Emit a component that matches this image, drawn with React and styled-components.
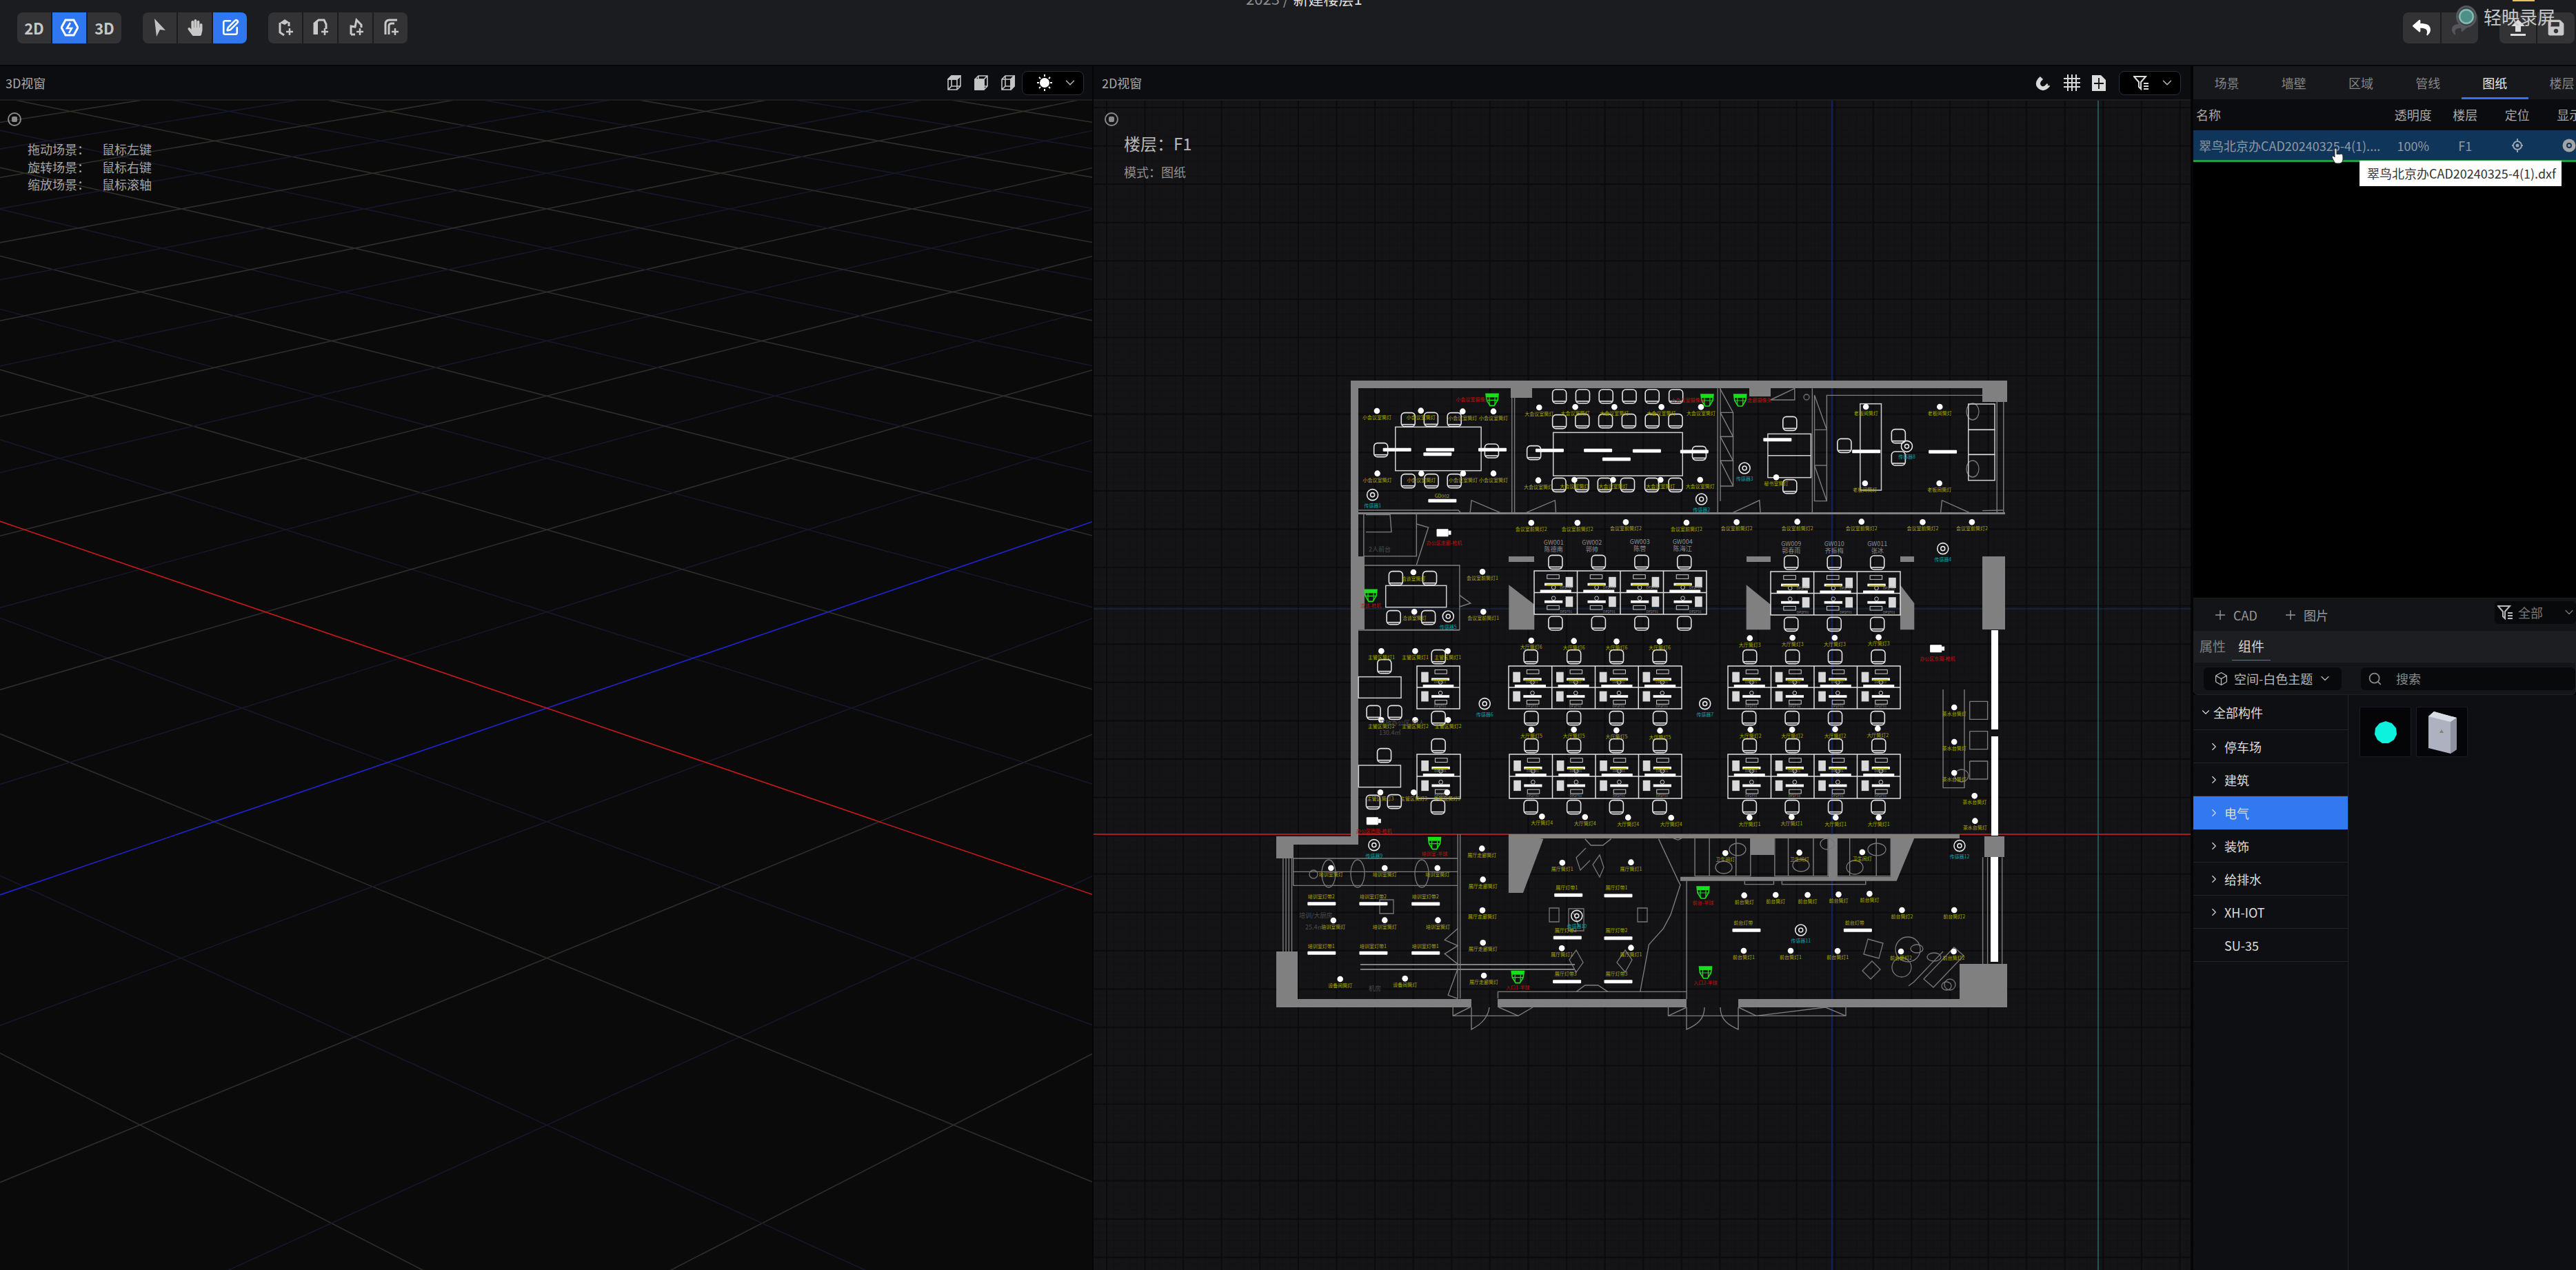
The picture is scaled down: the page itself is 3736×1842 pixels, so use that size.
import React from 'react'
import styled, { createGlobalStyle } from 'styled-components'
import { FaHandPaper, FaReply, FaShare, FaSave } from 'react-icons/fa'
import { ChevronDown, ChevronRight, Plus, Search, Box, SquarePen } from 'lucide-react'

const GlobalStyle = createGlobalStyle`
    html, body {
        margin: 0;
        padding: 0;
        height: 100%;
        background: #000;
    }
    #root {
        height: 100%;
    }
    * {
        box-sizing: border-box;
    }
`

const Page = styled.div`
    position: relative;
    display: flex;
    flex-direction: column;
    width: 100vw;
    height: 100vh;
    overflow: hidden;
    background: #000;
    color: #aaa;
    font-family: "Noto Sans CJK SC", "Noto Sans", sans-serif;
    font-size: 18px;
`

const TopBar = styled.div`
    position: relative;
    display: flex;
    align-items: center;
    justify-content: space-between;
    flex: 0 0 96px;
    padding: 0 2px 14px 25px;
    background: #1b1c20;
    border-bottom: 2px solid #060606;
`

const ToolRow = styled.div`
    display: flex;
    gap: 31px;
`

const ToolGroup = styled.div`
    display: flex;
    gap: 2px;
`

const ToolButton = styled.div`
    display: flex;
    align-items: center;
    justify-content: center;
    width: ${p => p.$width || 49}px;
    height: 45px;
    background: ${p => (p.$active ? '#2f77f1' : '#333335')};
    color: ${p => (p.$active ? '#fff' : p.$dim ? '#55555a' : '#c8c8c8')};
    font-size: 22px;
    font-weight: 700;

    &:first-child {
        border-radius: 8px 0 0 8px;
    }
    &:last-child {
        border-radius: 0 8px 8px 0;
    }
`

const ProjectTitle = styled.div`
    position: absolute;
    left: 1807px;
    top: -18px;
    color: #8c8c8c;
    font-size: 22px;
    line-height: 30px;
    white-space: nowrap;

    b {
        margin-left: 6px;
        color: #ddd;
        font-weight: 400;
    }
`

const Recorder = styled.div`
    position: absolute;
    left: 3562px;
    top: 8px;
    display: flex;
    align-items: center;
    gap: 10px;
    color: #c8c8c8;
    font-size: 26px;
    line-height: 32px;
`

const RecorderDot = styled.div`
    flex: 0 0 30px;
    height: 32px;
    border: 3px solid #555a5e;
    border-radius: 50%;
    background: radial-gradient(circle, #4f8f8a 0 45%, #9ad0c8 55%, #2a2d30 70%);
`

const YellowTick = styled.div`
    position: absolute;
    left: 3644px;
    top: 0;
    width: 32px;
    height: 2px;
    background: #e6c15a;
`

const Workspace = styled.div`
    display: flex;
    flex: 1;
    min-height: 0;
`

const Pane = styled.div`
    display: flex;
    flex-direction: column;
    flex: 0 0 ${p => p.$width}px;
    min-width: 0;
`

const PaneHeader = styled.div`
    display: flex;
    align-items: center;
    justify-content: space-between;
    flex: 0 0 50px;
    padding: 0 ${p => p.$right || 12}px 0 ${p => p.$left || 8}px;
    background: #0c0d10;
    border-bottom: 2px solid #1d1d1f;
    color: #a8a8a8;
    font-size: 18px;
`

const HeaderTools = styled.div`
    display: flex;
    align-items: center;
    gap: ${p => p.$gap || 19}px;
`

const ThemeSelect = styled.div`
    display: flex;
    align-items: center;
    justify-content: space-between;
    width: ${p => p.$width || 90}px;
    height: 35px;
    margin-left: ${p => p.$offset || 0}px;
    padding: 0 8px 0 20px;
    background: #000;
    border: 1px solid #2a2e3a;
    border-radius: 8px;
    color: #bbb;
`

const Divider = styled.div`
    flex: 0 0 ${p => p.$width}px;
    background: #050505;
`

const Canvas3D = styled.div`
    position: relative;
    flex: 1;
    overflow: hidden;
    background: #0a0a0b;
`

const Canvas2D = styled.div`
    position: relative;
    flex: 1;
    overflow: hidden;
    background-color: #141416;
    background-image:
        linear-gradient(#0b0b0c 2px, transparent 2px),
        linear-gradient(90deg, #0b0b0c 2px, transparent 2px),
        linear-gradient(#111113 1px, transparent 1px),
        linear-gradient(90deg, #111113 1px, transparent 1px);
    background-size: 55.6px 55.6px, 55.6px 55.6px, 11.12px 11.12px, 11.12px 11.12px;
    background-position: 0 9px, 18px 0, 0 9px, 18px 0;
`

const Drawing = styled.svg`
    position: absolute;
    inset: 0;
    width: 100%;
    height: 100%;
    font-family: "Noto Sans CJK SC", sans-serif;
`

const Overlay = styled.div`
    position: absolute;
    left: ${p => p.$left}px;
    top: ${p => p.$top}px;
`

const RecordMark = styled.div`
    display: flex;
    align-items: center;
    justify-content: center;
    width: 20px;
    height: 20px;
    border: 2px solid #8a8a8a;
    border-radius: 50%;

    &::after {
        content: "";
        width: 8px;
        height: 8px;
        border-radius: 2px;
        background: #8a8a8a;
    }
`

const HintRow = styled.div`
    display: grid;
    grid-template-columns: 108px auto;
    height: 25.5px;
    line-height: 25.5px;
    color: #a4a4a4;
    font-size: 18px;
`

const FloorTitle = styled.div`
    color: #b8b8b8;
    font-size: 24px;
    line-height: 34px;
`

const FloorMode = styled.div`
    margin-top: 11px;
    color: #909090;
    font-size: 18px;
    line-height: 26px;
`

const SidePanel = styled.div`
    position: relative;
    display: flex;
    flex-direction: column;
    flex: 1;
    min-width: 0;
    overflow: hidden;
    background: #000;
`

const SideTabs = styled.div`
    display: flex;
    flex: 0 0 48px;
    background: #17181b;
`

const SideTab = styled.div`
    position: relative;
    display: flex;
    align-items: center;
    justify-content: center;
    flex: 0 0 97.2px;
    color: ${p => (p.$active ? '#e8e8e8' : '#858585')};
    font-size: 18px;

    ${p => p.$active && `
        &::after {
            content: "";
            position: absolute;
            left: 0;
            right: 0;
            bottom: 0;
            height: 3px;
            background: #2f77f1;
        }
    `}
`

const FileHead = styled.div`
    display: grid;
    grid-template-columns: 281px repeat(4, 75.5px);
    align-items: center;
    flex: 0 0 45px;
    padding-bottom: 2px;
    background: #0b0c0f;
    color: #a8a8a8;
    font-size: 18px;
    white-space: nowrap;

    span:first-child {
        padding-left: 4px;
    }
    span:not(:first-child) {
        text-align: center;
    }
`

const FileRow = styled(FileHead)`
    flex: 0 0 46px;
    padding-bottom: 0;
    background: #10355a;
    border-bottom: 3px solid #2a9a3f;
    color: #8f9aa5;

    span:first-child {
        padding-left: 8px;
        overflow: hidden;
    }
    span:not(:first-child) {
        display: flex;
        justify-content: center;
    }
`

const FileList = styled.div`
    flex: 1;
    background: #000;
`

const Tooltip = styled.div`
    position: absolute;
    left: 241px;
    top: 137px;
    z-index: 2;
    width: 293px;
    height: 37px;
    padding-left: 11px;
    background: #fff;
    color: #333;
    font-size: 18px;
    line-height: 37px;
    white-space: nowrap;
`

const HandCursor = styled.svg`
    position: absolute;
    left: 200px;
    top: 118px;
    z-index: 3;
    width: 20px;
    height: 24px;
`

const ActionBar = styled.div`
    display: flex;
    align-items: center;
    flex: 0 0 48px;
    padding: 0 0 0 28px;
    background: #131417;
    border-top: 1px solid #1c1d20;
    color: #999;
    font-size: 18px;
`

const ActionLink = styled.div`
    display: flex;
    align-items: center;
    gap: 8px;
    width: ${p => p.$width}px;
`

const FilterSelect = styled.div`
    display: flex;
    align-items: center;
    flex: 0 0 113px;
    gap: 6px;
    height: 33px;
    margin-left: auto;
    margin-top: -7px;
    padding-left: 4px;
    background: #08090b;
    border-radius: 6px;
    color: #777;
    white-space: nowrap;

    svg {
        flex-shrink: 0;
    }
`

const SubTabs = styled.div`
    display: flex;
    align-items: stretch;
    flex: 0 0 45px;
    padding-left: 9px;
    gap: 9px;
    background: #1d1e21;
`

const SubTab = styled.div`
    display: flex;
    align-items: center;
    justify-content: center;
    color: ${p => (p.$active ? '#d8d8d8' : '#808080')};
    border-bottom: 1px solid ${p => (p.$active ? '#2f77f1' : 'transparent')};
    margin-bottom: 2px;
    padding: 0 ${p => (p.$active ? 9 : 0)}px;
    font-size: 19px;
`

const FilterBar = styled.div`
    display: flex;
    align-items: center;
    flex: 0 0 48px;
    padding-left: 14px;
    background: #141518;
    border: 1px solid #202126;
    border-radius: 0 0 6px 6px;
`

const SpaceSelect = styled.div`
    display: flex;
    align-items: center;
    gap: 8px;
    width: 200px;
    height: 33px;
    padding-left: 15px;
    background: #08090b;
    border-radius: 6px;
    color: #b8b8b8;
    white-space: nowrap;
`

const SearchBox = styled.div`
    display: flex;
    align-items: center;
    gap: 20px;
    flex: 1;
    height: 33px;
    margin-left: 28px;
    padding-left: 10px;
    background: #08090b;
    border-radius: 6px;
    color: #8a8a8a;
`

const LibraryBody = styled.div`
    display: flex;
    flex: 0 0 834px;
    min-height: 0;
    background: #0e0f12;
`

const Tree = styled.div`
    flex: 0 0 225px;
    border-right: 1px solid #24252b;
`

const TreeRow = styled.div`
    display: flex;
    align-items: center;
    gap: ${p => (p.$root ? 2 : 6)}px;
    height: ${p => (p.$root ? 51 : 48)}px;
    padding-left: ${p => (p.$root ? 9 : p.$leaf ? 45 : 21)}px;
    background: ${p => (p.$active ? '#3278f0' : 'transparent')};
    border-bottom: 1px solid ${p => (p.$active ? '#3278f0' : '#24252b')};
    color: #dcdcdc;
    font-size: 18px;
`

const Thumbs = styled.div`
    display: flex;
    align-items: flex-start;
    gap: 7px;
    padding: 17px 0 0 16px;
`

const Thumb = styled.div`
    display: flex;
    align-items: center;
    justify-content: center;
    width: 75px;
    height: 73px;
    background: #050507;
    border: 1px solid #1c1d24;
    border-radius: 2px;
`

/* ---- small icons ---- */

const ModeIcon = () => (
    <svg width="26" height="28" viewBox="0 0 26 28" fill="none" stroke="#fff" strokeWidth="3">
        <path d="M7 3h12l6 11-6 11H7L1 14z" />
        <path d="M14 7l-5 8h7l-4 7" strokeWidth="2.5" />
    </svg>
)

const PointerIcon = () => (
    <svg width="18" height="28" viewBox="0 0 18 28"><path d="M1 1l16 17-8-1-5 10z" fill="#c2c2c2" /></svg>
)

const DoorIcon = ({ d, fill }) => (
    <svg width="26" height="28" viewBox="0 0 26 28" fill="none" stroke="#c8c8c8" strokeWidth="3">
        {fill && <path d={fill} fill="#c8c8c8" stroke="none" />}
        <path d={d} />
        <path d="M19 15v10M14 20h10" strokeWidth="2.5" />
    </svg>
)

const UploadIcon = () => (
    <svg width="24" height="26" viewBox="0 0 24 26" fill="#ddd"><path d="M12 1l10 10h-6v8H8v-8H2zM1 22h22v3H1z" /></svg>
)

const CubeIcon = ({ mode }) => (
    <svg width="20" height="22" viewBox="0 0 20 22" fill="none" stroke="#c4c4c4" strokeWidth="1.6">
        {mode === 'top' && <path d="M1 6l5-5h13l-5 5z" fill="#c4c4c4" />}
        {mode === 'front' && <path d="M1 6h13v15H1z" fill="#c4c4c4" />}
        {mode === 'side' && <path d="M14 6l5-5v15l-5 5z" fill="#c4c4c4" />}
        <path d="M1 6l5-5h13v15l-5 5H1zM1 6h13v15M14 6l5-5M1 21l5-5V1M6 16h13" />
    </svg>
)

const SunIcon = () => (
    <svg width="24" height="26" viewBox="0 0 24 26" fill="#fff" stroke="#fff" strokeWidth="2">
        <circle cx="12" cy="13" r="6" />
        <path d="M12 1v3M12 22v3M1 13h3M20 13h3M4 5l2 2M18 19l2 2M20 5l-2 2M6 19l-2 2" fill="none" />
    </svg>
)

const FilterIcon = ({ color = '#ddd' }) => (
    <svg width="24" height="22" viewBox="0 0 24 22" fill="none" stroke={color} strokeWidth="2">
        <path d="M1 2h17l-7 8v10l-3-3v-7z" />
        <path d="M15 12h7M15 16h7M15 20h7" />
    </svg>
)

const MagnetIcon = () => (
    <svg width="24" height="24" viewBox="0 0 24 24" fill="none" stroke="#d8d8d8" strokeWidth="6">
        <path d="M9 5l-3 3c-3 4-3 7 0 10s7 3 10 0l3-3" />
        <path d="M8 1l5 5M23 11l-5 5" stroke="#141416" strokeWidth="1.5" />
    </svg>
)

const GridIcon = () => (
    <svg width="24" height="24" viewBox="0 0 24 24" stroke="#d8d8d8" strokeWidth="2">
        <path d="M6 0v24M12 0v24M18 0v24M0 6h24M0 12h24M0 18h24" />
    </svg>
)

const SheetIcon = () => (
    <svg width="20" height="23" viewBox="0 0 20 23">
        <path d="M0 0h13l7 7v16H0z" fill="#dcdcdc" />
        <path d="M10 4v16M3 12h14" stroke="#111" strokeWidth="1.8" />
    </svg>
)

const LocateIcon = () => (
    <svg width="20" height="22" viewBox="0 0 20 22" fill="none" stroke="#99a4b0" strokeWidth="2">
        <path d="M10 1v4M10 17v4M2 11h3M15 11h3" />
        <circle cx="10" cy="11" r="6" />
        <circle cx="10" cy="11" r="2.5" fill="#99a4b0" stroke="none" />
    </svg>
)

const EyeIcon = () => (
    <svg width="20" height="20" viewBox="0 0 20 20">
        <circle cx="10" cy="10" r="9.5" fill="#a4a4a4" />
        <circle cx="10" cy="10" r="4" fill="#10355a" />
        <circle cx="10" cy="10" r="2" fill="#a4a4a4" />
    </svg>
)

/* ---- 3D ground grid, two vanishing points on the horizon ---- */

const HORIZON = -780
const VP_RIGHT = 6082
const VP_LEFT = -4496
const CENTER_X = 793

function gridLine(vpX, n) {
    const y = 1 / (5.534e-4 + n * 4.625e-5) + HORIZON
    const slope = (HORIZON - y) / (vpX - CENTER_X)
    return { y1: y + slope * (0 - CENTER_X), y2: y + slope * (1584 - CENTER_X) }
}

function GroundGrid() {
    const lines = []
    for (let n = -8; n <= 16; n++) {
        if (n === 0) continue
        const color = n % 2 === 0 ? '#2f2e2b' : '#17172c'
        lines.push({ key: 'r' + n, ...gridLine(VP_RIGHT, n), color })
        lines.push({ key: 'l' + n, ...gridLine(VP_LEFT, n), color })
    }
    const blue = gridLine(VP_RIGHT, 0)
    const red = gridLine(VP_LEFT, 0)
    return (
        <Drawing viewBox="0 146 1584 1696" preserveAspectRatio="none">
            {lines.map(l => (
                <line key={l.key} x1="0" x2="1584" y1={l.y1} y2={l.y2} stroke={l.color} strokeWidth="1.6" />
            ))}
            <line x1="0" x2="1584" y1={blue.y1} y2={blue.y2} stroke="#2222d0" strokeWidth="1.6" />
            <line x1="0" x2="1584" y1={red.y1} y2={red.y2} stroke="#c81a1a" strokeWidth="1.6" />
        </Drawing>
    )
}

/* ---- floor plan ---- */

const GRAY = '#808080'
const up = (X, Y) => [1930 + X / 1.568, 530 + Y / 3]
const low = (X, Y) => [1830 + X / 1.425, 1000 + Y / 3]

const pts = (fn, list) => list.map(([X, Y]) => fn(X, Y).join(',')).join(' ')
const row = (fn, list, label) => list.map(([X, Y]) => ({ at: fn(X, Y), label }))

const WALLS = [
    [1959, 552, 952, 11], [1959, 552, 11, 661], [1851, 1213, 119, 12], [1851, 1213, 25, 32],
    [1851, 1380, 31, 81], [1851, 1449, 283, 12], [2172, 1449, 274, 12], [2521, 1449, 390, 12],
    [2842, 1398, 69, 63], [2875, 552, 36, 31], [2191, 563, 31, 14], [2537, 563, 31, 12],
    [1970, 743, 938, 3], [2875, 807, 33, 106], [2878, 1213, 29, 30], [1959, 807, 20, 106],
    [2188, 1210, 654, 6], [2188, 807, 37, 8], [2533, 807, 35, 8], [2756, 807, 20, 8],
    [2539, 1213, 34, 27], [2652, 1213, 13, 60], [1973, 1398, 311, 2], [1973, 1405, 311, 2],
]

const WHITE_STRIPS = [[2888, 914, 10, 144], [2888, 1068, 10, 144], [2887, 1243, 11, 152]]

const WALL_POLYS = [
    [up, [[405, 955], [463, 1040], [463, 1150], [405, 1150]]],
    [up, [[945, 955], [1000, 1040], [1000, 1150], [945, 1150]]],
    [up, [[1295, 955], [1327, 1035], [1327, 1150], [1295, 1150]]],
    [low, [[510, 630], [582, 650], [540, 885], [510, 885]]],
    [low, [[865, 815], [1300, 815], [1300, 640], [1350, 640], [1312, 833], [865, 833]]],
]

const THIN_LINES = [
    [up, [[412, 140], [412, 640]]], [up, [[418, 140], [418, 640]]],
    [up, [[880, 100], [880, 640]]], [up, [[886, 100], [886, 590]]],
    [up, [[885, 100], [915, 205], [915, 525], [885, 525]]],
    [up, [[886, 205], [915, 205]]], [up, [[886, 310], [915, 310]]], [up, [[886, 415], [915, 415]]],
    [up, [[886, 205], [915, 310], [886, 310], [915, 415], [886, 415], [915, 525]]],
    [up, [[1095, 100], [1095, 640]]], [up, [[1100, 130], [1100, 590], [1128, 590], [1128, 130], [1482, 130]]],
    [up, [[1100, 130], [1128, 280], [1100, 280]]], [up, [[1100, 435], [1128, 590]]], [up, [[1100, 435], [1128, 435]]],
    [up, [[1000, 150], [1055, 100], [1055, 150], [1000, 150]]],
    [up, [[1530, 140], [1530, 640]]], [up, [[1515, 140], [1515, 640]]],
    [up, [[63, 630], [290, 630], [295, 640]]], [up, [[1482, 632], [1530, 630]]],
    [up, [[317, 640], [320, 587], [385, 640]]], [up, [[445, 640], [510, 587], [512, 640]]],
    [up, [[915, 640], [975, 587], [977, 640]]], [up, [[1387, 640], [1390, 587], [1452, 640]]],
    [up, [[75, 648], [75, 830], [195, 830], [195, 648]]], [up, [[80, 650], [135, 650], [138, 725], [80, 725]]],
    [up, [[195, 690], [222, 705], [195, 868]]],
    [up, [[77, 870], [293, 870], [293, 1150], [77, 1150]]],
    [up, [[293, 1000], [318, 1035], [293, 1050]]],
    [up, [[63, 1152], [293, 1152]]],
    [low, [[405, 630], [405, 1345]]], [low, [[410, 630], [410, 1345]]],
    [low, [[65, 735], [405, 735]]], [low, [[65, 793], [405, 793]]], [low, [[65, 853], [405, 853]]],
    [low, [[65, 735], [65, 853]]],
    [low, [[44, 735], [44, 1140]]], [low, [[50, 735], [50, 1140]]], [low, [[56, 735], [56, 1140]]], [low, [[62, 735], [62, 1140]]],
    [low, [[405, 1040], [378, 1090], [405, 1115], [378, 1150], [405, 1195]]],
    [low, [[405, 1215], [385, 1330], [405, 1345]]],
    [low, [[488, 1345], [488, 1315], [878, 1315]]],
    [low, [[650, 1315], [668, 1287], [695, 1287], [715, 1315]]],
    [low, [[668, 650], [680, 678], [705, 678], [722, 650]]],
    [low, [[820, 650], [860, 830], [865, 850], [845, 980], [830, 1040], [800, 1110], [782, 1315]]],
    [low, [[830, 630], [860, 655], [885, 630]]],
    [low, [[878, 833], [878, 1347]]],
    [low, [[895, 640], [895, 812], [1010, 812], [1010, 640]]], [low, [[925, 640], [925, 812]]], [low, [[980, 640], [980, 812]]],
    [low, [[1060, 640], [1060, 812], [1170, 812], [1170, 640]]], [low, [[1088, 640], [1088, 812]]], [low, [[1140, 640], [1140, 812]]],
    [low, [[1188, 640], [1188, 812], [1300, 812], [1300, 640]]], [low, [[1215, 640], [1215, 812]]], [low, [[1270, 640], [1270, 812]]],
    [low, [[998, 833], [998, 848], [1058, 848], [1058, 833]]], [low, [[1075, 833], [1075, 848], [1248, 848], [1248, 833]]],
    [low, [[395, 1383], [395, 1420], [530, 1420], [560, 1383]]], [low, [[395, 1420], [430, 1383]]], [low, [[490, 1383], [530, 1420]]],
    [low, [[840, 1383], [840, 1420], [1207, 1420], [1207, 1383]]], [low, [[840, 1420], [878, 1383]]], [low, [[985, 1383], [1022, 1420], [1165, 1383], [1207, 1420]]],
    [low, [[1490, 730], [1490, 1195]]], [low, [[1530, 730], [1530, 1195]]], [low, [[1500, 730], [1500, 1195]]],
    [low, [[1408, 0], [1408, 428], [1452, 428], [1452, 0]]],
    [low, [[1463, 52], [1500, 52], [1500, 130], [1463, 130], [1463, 52]]],
    [low, [[1463, 182], [1500, 182], [1500, 260], [1463, 260], [1463, 182]]],
    [low, [[1463, 312], [1500, 312], [1500, 390], [1463, 390], [1463, 312]]],
]

const DOOR_ARCS = [
    'M2134 1461v32c12-6 24-16 26-32', 'M2446 1461v32c14-6 26-14 26-32', 'M2521 1461v32c-14-6-26-14-26-32',
]

/* toilets, plants and round tables */
const LOUNGE = [
    [2767, 1377, 18, 18], [2758, 1403, 14, 14], [2828, 1428, 8, 8], [2823, 1430, 7, 6],
    [2722, 1232, 13, 9], [2690, 1258, 12, 10], [2650, 1224, 10, 8], [2612, 1255, 12, 9], [2520, 1232, 12, 9], [2500, 1258, 12, 9],
    [2780, 1376, 9, 6], [2805, 1388, 10, 6], [2620, 576, 4, 4],
    [1927, 1267, 10, 20], [1969, 1267, 10, 20], [2062, 1267, 10, 20],
    [2861, 597, 9, 12], [2861, 680, 9, 12], [2845, 1125, 10, 9], [1905, 1268, 6, 6],
]

const WHITE_BARS = [
    ...[[150, 367], [248, 367], [242, 386], [367, 367], [497, 370], [607, 370], [718, 372], [826, 375], [649, 408], [253, 589], [1015, 323], [1217, 374], [1391, 376]].map(([X, Y]) => up(X, Y)),
    ...[[123, 932], [230, 932], [338, 933], [123, 1147], [230, 1147], [338, 1147], [633, 895], [736, 897], [631, 1080], [736, 1082], [630, 1271], [736, 1271], [1001, 1048], [1231, 1048]].map(([X, Y]) => low(X, Y)),
]

const BAR_LABELS = [
    [low(123, 1118), '培训室灯带1'], [low(230, 1118), '培训室灯带1'], [low(338, 1118), '培训室灯带1'],
    [low(123, 903), '培训室灯带2'], [low(230, 903), '培训室灯带2'], [low(338, 903), '培训室灯带2'],
    [low(630, 865), '展厅灯带1'], [low(733, 865), '展厅灯带1'], [low(628, 1050), '展厅灯带2'], [low(733, 1050), '展厅灯带2'],
    [low(628, 1240), '展厅灯带3'], [low(733, 1240), '展厅灯带3'], [low(995, 1018), '前台灯带'], [low(1225, 1018), '前台灯带'],
    [up(253, 569), 'GD002'],
]

const LIGHTS = [
    ...row(up, [[105, 198], [205, 197], [300, 200], [370, 200], [106, 470], [206, 470], [301, 470], [370, 470]], '小会议室筒灯'),
    ...row(up, [[474, 183], [556, 181], [645, 181], [752, 181], [842, 181], [472, 500], [554, 498], [642, 498], [750, 498], [840, 498]], '大会议室筒灯'),
    ...row(up, [[1217, 180], [1385, 180], [1215, 513], [1384, 513]], '老板间筒灯'),
    ...row(up, [[1013, 487]], '秘书室筒灯'),
    ...row(up, [[456, 685], [561, 685], [671, 682], [809, 684], [923, 682], [1061, 680], [1207, 680], [1346, 682], [1458, 682]], '会议室前筒灯2'),
    ...row(up, [[345, 898], [347, 1072]], '会议室前筒灯1'),
    ...row(up, [[188, 900], [190, 1072]], '洽谈室筒灯'),
    ...row(up, [[456, 1197], [553, 1199], [650, 1201], [748, 1201]], '大厅筒灯6'),
    ...row(up, [[953, 1187], [1050, 1185], [1146, 1185], [1246, 1183]], '大厅筒灯3'),
    ...row(up, [[115, 1243], [192, 1243], [266, 1243]], '主管区筒灯1'),
    ...row(low, [[247, 133], [317, 133], [385, 133]], '主管区筒灯2'),
    ...row(low, [[557, 175], [645, 175], [733, 178], [823, 179]], '大厅筒灯5'),
    ...row(low, [[1010, 175], [1096, 175], [1185, 173], [1273, 170]], '大厅筒灯2'),
    ...row(low, [[245, 448], [314, 448], [383, 448]], '主管区筒灯3'),
    ...row(low, [[579, 553], [668, 555], [757, 557], [846, 558]], '大厅筒灯4'),
    ...row(low, [[1008, 557], [1095, 555], [1186, 557], [1275, 557]], '大厅筒灯1'),
    ...row(low, [[1473, 463], [1474, 572], [1431, 78], [1431, 228], [1431, 363]], '茶水台筒灯'),
    ...row(low, [[455, 692], [457, 827], [456, 961], [457, 1102], [459, 1245]], '展厅走廊筒灯'),
    ...row(low, [[621, 754], [763, 752], [620, 1126], [763, 1124]], '展厅筒灯1'),
    ...row(low, [[143, 777], [254, 777], [363, 777], [148, 1005], [254, 1004], [364, 1004]], '培训室筒灯'),
    ...row(low, [[162, 1260], [296, 1258]], '设备间筒灯'),
    ...row(low, [[958, 712], [1111, 710], [1241, 708]], '卫生间灯'),
    ...row(low, [[997, 896], [1062, 894], [1128, 894], [1192, 892], [1256, 889]], '前台筒灯'),
    ...row(low, [[1323, 960], [1431, 960], [1321, 1140], [1430, 1140]], '前台筒灯2'),
    ...row(low, [[996, 1137], [1093, 1137], [1190, 1138]], '前台筒灯1'),
]

const CHAIRS = [
    ...[[520, 135], [573, 135], [626, 135], [679, 135], [731, 135], [785, 135], [520, 245], [572, 242], [625, 242], [678, 242], [731, 242], [784, 242],
        [519, 520], [571, 520], [623, 520], [675, 520], [730, 520], [784, 520], [176, 236], [228, 235], [281, 236], [176, 503], [229, 503], [281, 503],
        [1044, 253], [1044, 527], [511, 856], [609, 856], [707, 856], [804, 856], [1047, 858], [1145, 858], [1243, 858],
        [511, 1122], [609, 1122], [707, 1122], [804, 1122], [1047, 1126], [1145, 1126], [1243, 1126], [148, 926], [225, 926], [143, 1097], [222, 1097],
        [455, 1268], [553, 1268], [650, 1268], [748, 1268], [953, 1268], [1050, 1268], [1147, 1268], [1245, 1268], [245, 1268], [122, 1310], [1291, 308], [1291, 405],
        [462, 380], [838, 382], [114, 368], [366, 372], [1168, 349]].map(([X, Y]) => up(X, Y)),
    ...[[231, 100], [275, 100], [365, 125], [557, 125], [645, 125], [733, 125], [823, 125], [1007, 125], [1096, 125], [1185, 125], [1273, 125],
        [365, 245], [253, 287], [557, 245], [645, 245], [733, 245], [823, 245], [1008, 245], [1097, 245], [1186, 245], [1275, 245],
        [230, 490], [274, 488], [364, 512], [556, 512], [645, 512], [733, 512], [822, 512], [1008, 512], [1096, 512], [1185, 512], [1274, 512]].map(([X, Y]) => low(X, Y)),
]

const SENSORS = [
    ...[[95, 563], [843, 582], [941, 447], [1392, 797], [267, 1092], [350, 1472], [851, 1472], [1310, 352]].map(([X, Y]) => up(X, Y)),
    ...[[232, 677], [651, 985], [1114, 1047], [1442, 680]].map(([X, Y]) => low(X, Y)),
]

const CAMERAS = [
    [up(367, 148), '小会议室摄像头', -1], [up(856, 150), '大会议室摄像头', -1], [up(931, 150), '走廊摄像头', 1], [up(91, 1000), '洽谈-枪机', 0],
    [low(357, 668), '培训室-半球', 0], [low(912, 882), '前台-半球', 0], [low(529, 1250), '入口1-半球', 0], [low(917, 1230), '入口2-半球', 0],
]

const BULLETS = [
    [up(258, 728), '办公区走廊-枪机'], [up(1380, 1232), '办公区东南-枪机'], [low(232, 572), '办公区西南-枪机'],
]

const GW_LABELS = [
    [up(507, 770), 'GW001', '陈德南'], [up(594, 770), 'GW002', '郭帅'], [up(703, 767), 'GW003', '陈营'], [up(800, 768), 'GW004', '陈海江'],
    [up(1047, 776), 'GW009', '郭春雨'], [up(1145, 776), 'GW010', '齐振梅'], [up(1243, 776), 'GW011', '张冰'],
]

const STATION_BLOCKS = [
    { x: 2225, y: 828, w: 250, h: 63, cols: 4 },
    { x: 2568, y: 829, w: 188, h: 63, cols: 3 },
    { x: 2188, y: 966, w: 251, h: 62, cols: 4, mirror: true },
    { x: 2506, y: 966, w: 250, h: 62, cols: 4, mirror: true },
    { x: 2189, y: 1094, w: 250, h: 64, cols: 4, mirror: true },
    { x: 2506, y: 1094, w: 250, h: 64, cols: 4, mirror: true },
    { x: 2055, y: 966, w: 62, h: 62, cols: 1, mirror: true },
    { x: 2055, y: 1094, w: 63, h: 64, cols: 1, mirror: true },
]

const ROOM_RECTS = [
    [up(147, 268), up(342, 458)], [up(506, 292), up(800, 480)], [up(994, 298), up(1092, 488)],
    [up(125, 958), up(263, 1052)], [up(63, 1355), up(160, 1447)], [low(200, 330), low(287, 425)],
    [up(1204, 167), up(1252, 543)], [up(1450, 168), up(1510, 280)], [up(1450, 280), up(1510, 388)], [up(1450, 388), up(1510, 500)],
]

const StationCell = ({ x, y, w, h, flip, mirror }) => {
    const m = v => (mirror ? x + w - (v - x) : v)
    const box = (vx, vw) => (mirror ? m(vx) - vw : vx)
    const top = flip ? y + h * 0.08 : y + h * 0.18
    return (
        <g>
            <rect x={box(x + w * 0.3, w * 0.28)} y={flip ? y + h * 0.6 : y + h * 0.18} width={w * 0.28} height={h * 0.18} fill="none" stroke="#cfcfcf" />
            <rect x={box(x + w * 0.73, w * 0.17)} y={top + h * 0.1} width={w * 0.17} height={h * 0.48} fill="#d8d8d8" />
            <rect x={box(x + w * 0.24, w * 0.42)} y={flip ? y + h * 0.36 : y + h * 0.56} width={w * 0.42} height={h * 0.12} fill="#fff" />
            <circle cx={m(x + w * 0.45)} cy={flip ? y + h * 0.26 : y + h * 0.76} r={h * 0.09} fill="none" stroke="#cfcfcf" />
            {!flip && <rect x={box(x + w * 0.14, w * 0.72)} y={y + h - 4} width={w * 0.72} height={4} fill="#fff" />}
            {!flip && <rect x={box(x + w * 0.28, w * 0.36)} y={y + h * 0.62} width={w * 0.36} height={2} fill="#b5b500" />}
            <text x={box(x + w * 0.6, 0)} y={y + h - (flip ? 2 : 6)} fontSize="5" fill="#8a8a8a">DP2F01</text>
        </g>
    )
}

function FloorPlan() {
    return (
        <Drawing viewBox="1586 146 1591 1696" preserveAspectRatio="none">
            <line x1="1586" x2="3177" y1="1210" y2="1210" stroke="#a81c1c" strokeWidth="2" />
            <line x1="1586" x2="3177" y1="883" y2="883" stroke="#18305c" strokeWidth="1.2" />
            <line x1="2657" x2="2657" y1="146" y2="1842" stroke="#182478" strokeWidth="1.5" />
            <line x1="3043" x2="3043" y1="146" y2="1842" stroke="#2c6a70" strokeWidth="1.5" />

            {WALLS.map(([x, y, w, h], i) => <rect key={i} x={x} y={y} width={w} height={h} fill={GRAY} />)}
            {WALL_POLYS.map(([fn, list], i) => <polygon key={i} points={pts(fn, list)} fill={GRAY} />)}
            {WHITE_STRIPS.map(([x, y, w, h], i) => <rect key={i} x={x} y={y} width={w} height={h} fill="#fff" />)}
            {THIN_LINES.map(([fn, list], i) => <polyline key={i} points={pts(fn, list)} fill="none" stroke="#7c7c7c" strokeWidth="1.4" />)}
            {DOOR_ARCS.map((d, i) => <path key={i} d={d} fill="none" stroke="#7c7c7c" strokeWidth="1.4" />)}
            {LOUNGE.map(([cx, cy, rx, ry], i) => <ellipse key={i} cx={cx} cy={cy} rx={rx} ry={ry} fill="none" stroke="#777" strokeWidth="1.3" />)}
            <g fill="none" stroke="#777" strokeWidth="1.3">
                <path d="M2790 1420l44-46 14 12-44 46zM2768 1430l8-6 42-44" />
                <path d="M2709 1362l22 6-6 22-22-6zM2727 1406l-14 14-12-12 14-14zM2320 1240l6 18-6 14-10-18zM2300 1230l-14 14 6 18 14-14" />
                <path d="M2275 1318h22v32h-22zM2282 1324l8 20M2247 1317h14v20h-14zM2375 1317h14v20h-14z" />
                <path d="M2286 1378l10 18-10 14-10-18zM2357 1378l-12 18 12 14 10-18z" />
                <path d="M2001 1305h20v20h-20z" />
            </g>

            {ROOM_RECTS.map(([a, b], i) => (
                <rect key={i} x={a[0]} y={a[1]} width={b[0] - a[0]} height={b[1] - a[1]} fill="none" stroke="#d0d0d0" strokeWidth="1.5" />
            ))}
            <line x1={up(994, 392)[0]} x2={up(1092, 392)[0]} y1={up(994, 392)[1]} y2={up(1092, 392)[1]} stroke="#d0d0d0" strokeWidth="1.5" />

            {STATION_BLOCKS.map((b, i) => {
                const cw = b.w / b.cols
                const ch = b.h / 2
                return (
                    <g key={i}>
                        <rect x={b.x} y={b.y} width={b.w} height={b.h} fill="none" stroke="#e0e0e0" strokeWidth="1.5" />
                        <line x1={b.x} x2={b.x + b.w} y1={b.y + ch} y2={b.y + ch} stroke="#e0e0e0" strokeWidth="1.5" />
                        {Array.from({ length: b.cols }).map((_, c) => (
                            <g key={c}>
                                {c > 0 && <line x1={b.x + cw * c} x2={b.x + cw * c} y1={b.y} y2={b.y + b.h} stroke="#e0e0e0" strokeWidth="1.5" />}
                                <StationCell x={b.x + cw * c} y={b.y} w={cw} h={ch} mirror={b.mirror} />
                                <StationCell x={b.x + cw * c} y={b.y + ch} w={cw} h={ch} flip mirror={b.mirror} />
                            </g>
                        ))}
                    </g>
                )
            })}

            {CHAIRS.map(([x, y], i) => (
                <g key={i} fill="none" stroke="#e4e4e4" strokeWidth="1.6">
                    <rect x={x - 10} y={y - 10} width="20" height="20" rx="5" />
                    <line x1={x - 9} x2={x + 9} y1={y + 7} y2={y + 7} />
                </g>
            ))}

            {WHITE_BARS.map(([x, y], i) => <rect key={i} x={x - 20} y={y - 2.5} width="41" height="5" rx="1" fill="#fff" />)}
            {BAR_LABELS.map(([[x, y], t], i) => <text key={i} x={x} y={y + 2} textAnchor="middle" fontSize="7" fill="#a8a800">{t}</text>)}

            {LIGHTS.map(({ at: [x, y], label }, i) => (
                <g key={i}>
                    <circle cx={x} cy={y} r="4.3" fill="#fff" />
                    <text x={x} y={y + 12} textAnchor="middle" fontSize="7" fill="#a8a800">{label}</text>
                </g>
            ))}

            {SENSORS.map(([x, y], i) => (
                <g key={i} fill="none" stroke="#e8e8e8" strokeWidth="1.6">
                    <circle cx={x} cy={y} r="8" />
                    <circle cx={x} cy={y} r="3" />
                    <text x={x} y={y + 18} textAnchor="middle" fontSize="7" fill="#08a0a8" stroke="none">传感器{i + 1}</text>
                </g>
            ))}

            {CAMERAS.map(([[x, y], t, side], i) => (
                <g key={i}>
                    <path d={`M${x - 9} ${y - 8}h18l-1 9-5 8h-6l-5-8z`} fill="none" stroke="#18e018" strokeWidth="1.6" />
                    <path d={`M${x - 8} ${y + 1}h16M${x - 4} ${y - 3}v11M${x + 4} ${y - 3}v11`} fill="none" stroke="#18e018" strokeWidth="1.2" />
                    <rect x={x - 9} y={y - 8} width="18" height="5" fill="#18e018" />
                    <text x={side === 0 ? x : x + side * 28} y={side === 0 ? y + 18 : y + 3} textAnchor="middle" fontSize="7" fill="#c01010">{t}</text>
                </g>
            ))}

            {BULLETS.map(([[x, y], t], i) => (
                <g key={i}>
                    <rect x={x - 11} y={y - 5.5} width="17" height="11" rx="1" fill="#fff" />
                    <rect x={x + 6} y={y - 3} width="4" height="6" fill="#fff" />
                    <text x={x} y={y + 17} textAnchor="middle" fontSize="7" fill="#c01010">{t}</text>
                </g>
            ))}

            {GW_LABELS.map(([[x, y], code, name]) => (
                <g key={code} fontSize="9" fill="#8c8c8c" textAnchor="middle">
                    <text x={x} y={y + 3}>{code}</text>
                    <text x={x} y={y + 13}>{name}</text>
                </g>
            ))}
            <g fontSize="9" fill="#4c4c4c">
                <text x="2000" y="1052">开放办公区 35人</text>
                <text x="2000" y="1066">130.4㎡</text>
                <text x="1884" y="1331">培训/大厨房</text>
                <text x="1893" y="1348">25.4㎡</text>
                <text x="1985" y="800">2人前台</text>
                <text x="1985" y="1437">机房</text>
            </g>
        </Drawing>
    )
}

const TREE = ['停车场', '建筑', '电气', '装饰', '给排水', 'XH-IOT']

export default function App() {
    return (
        <Page>
            <GlobalStyle />
            <TopBar>
                <ToolRow>
                    <ToolGroup>
                        <ToolButton>2D</ToolButton>
                        <ToolButton $active><ModeIcon /></ToolButton>
                        <ToolButton>3D</ToolButton>
                    </ToolGroup>
                    <ToolGroup>
                        <ToolButton><PointerIcon /></ToolButton>
                        <ToolButton><FaHandPaper size={24} /></ToolButton>
                        <ToolButton $active><SquarePen size={26} strokeWidth={2.4} /></ToolButton>
                    </ToolGroup>
                    <ToolGroup>
                        <ToolButton><DoorIcon fill="M5 7l7-5 6 4-6 4z" d="M5 7v14l6 4M18 6v6" /></ToolButton>
                        <ToolButton><DoorIcon fill="M3 24V8l6-5v21z" d="M4 24V8l6-5h8l3 6v7" /></ToolButton>
                        <ToolButton><DoorIcon d="M6 24V12l6 1 2-10 7 7v4M6 24h6" /></ToolButton>
                        <ToolButton><DoorIcon d="M5 24V9c0-4 2-6 6-6h11M10 24V12c0-3 1-4 4-4h4" /></ToolButton>
                    </ToolGroup>
                </ToolRow>
                <ToolRow>
                    <ToolGroup>
                        <ToolButton $width={54}><FaReply size={26} color="#fff" /></ToolButton>
                        <ToolButton $dim $width={53}><FaShare size={24} /></ToolButton>
                    </ToolGroup>
                    <ToolGroup>
                        <ToolButton $width={53}><UploadIcon /></ToolButton>
                        <ToolButton $width={54}><FaSave size={26} /></ToolButton>
                    </ToolGroup>
                </ToolRow>
                <ProjectTitle>2023 /<b>新建楼层1</b></ProjectTitle>
                <Recorder><RecorderDot />轻映录屏</Recorder>
                <YellowTick />
            </TopBar>
            <Workspace>
                <Pane $width={1584}>
                    <PaneHeader>
                        3D视窗
                        <HeaderTools>
                            <CubeIcon mode="top" />
                            <CubeIcon mode="front" />
                            <CubeIcon mode="side" />
                            <ThemeSelect $offset={-9}><SunIcon /><ChevronDown size={22} strokeWidth={1.5} /></ThemeSelect>
                        </HeaderTools>
                    </PaneHeader>
                    <Canvas3D>
                        <GroundGrid />
                        <Overlay $left={11} $top={17}><RecordMark /></Overlay>
                        <Overlay $left={40} $top={58}>
                            <HintRow><span>拖动场景：</span><span>鼠标左键</span></HintRow>
                            <HintRow><span>旋转场景：</span><span>鼠标右键</span></HintRow>
                            <HintRow><span>缩放场景：</span><span>鼠标滚轴</span></HintRow>
                        </Overlay>
                    </Canvas3D>
                </Pane>
                <Divider $width={2} />
                <Pane $width={1591}>
                    <PaneHeader $left={12} $right={14}>
                        2D视窗
                        <HeaderTools $gap={17}>
                            <MagnetIcon />
                            <GridIcon />
                            <SheetIcon />
                            <ThemeSelect $offset={2}><FilterIcon /><ChevronDown size={22} strokeWidth={1.5} /></ThemeSelect>
                        </HeaderTools>
                    </PaneHeader>
                    <Canvas2D>
                        <FloorPlan />
                        <Overlay $left={16} $top={17}><RecordMark /></Overlay>
                        <Overlay $left={44} $top={45}>
                            <FloorTitle>楼层：F1</FloorTitle>
                            <FloorMode>模式：图纸</FloorMode>
                        </Overlay>
                    </Canvas2D>
                </Pane>
                <Divider $width={4} />
                <SidePanel>
                    <SideTabs>
                        <SideTab>场景</SideTab>
                        <SideTab>墙壁</SideTab>
                        <SideTab>区域</SideTab>
                        <SideTab>管线</SideTab>
                        <SideTab $active>图纸</SideTab>
                        <SideTab>楼层</SideTab>
                    </SideTabs>
                    <FileHead>
                        <span>名称</span><span>透明度</span><span>楼层</span><span>定位</span><span>显示</span>
                    </FileHead>
                    <FileRow>
                        <span>翠鸟北京办CAD20240325-4(1)....</span>
                        <span>100%</span>
                        <span>F1</span>
                        <span><LocateIcon /></span>
                        <span><EyeIcon /></span>
                    </FileRow>
                    <Tooltip>翠鸟北京办CAD20240325-4(1).dxf</Tooltip>
                    <HandCursor viewBox="0 0 20 24">
                        <path d="M6 1c1.5 0 2 1 2 2v7l1-1 1 1 1-1 1 1 2-1c2 0 3 2 3 4v4c0 3-2 6-5 6H8c-2 0-3-1-4-3l-3-6c0-2 2-2 3-1l1 1V3c0-1 0-2 1-2z" fill="#fff" stroke="#222" />
                    </HandCursor>
                    <FileList />
                    <ActionBar>
                        <ActionLink $width={102}><Plus size={22} strokeWidth={1.5} />CAD</ActionLink>
                        <ActionLink $width={100}><Plus size={22} strokeWidth={1.5} />图片</ActionLink>
                        <FilterSelect><FilterIcon color="#bbb" />全部<ChevronDown size={20} strokeWidth={1.5} style={{ marginLeft: 22 }} /></FilterSelect>
                    </ActionBar>
                    <SubTabs>
                        <SubTab>属性</SubTab>
                        <SubTab $active>组件</SubTab>
                    </SubTabs>
                    <FilterBar>
                        <SpaceSelect><Box size={21} strokeWidth={1.5} />空间-白色主题<ChevronDown size={20} strokeWidth={1.5} /></SpaceSelect>
                        <SearchBox><Search size={21} strokeWidth={2} />搜索</SearchBox>
                    </FilterBar>
                    <LibraryBody>
                        <Tree>
                            <TreeRow $root><ChevronDown size={18} strokeWidth={1.5} />全部构件</TreeRow>
                            {TREE.map(name => (
                                <TreeRow key={name} $active={name === '电气'}>
                                    <ChevronRight size={18} strokeWidth={1.5} />{name}
                                </TreeRow>
                            ))}
                            <TreeRow $leaf>SU-35</TreeRow>
                        </Tree>
                        <Thumbs>
                            <Thumb>
                                <svg width="34" height="34" viewBox="0 0 34 34">
                                    <polygon points="17,1 26,4 32,11 33,20 29,28 21,33 12,33 5,28 1,20 2,11 8,4" fill="#0cf2dc" />
                                </svg>
                            </Thumb>
                            <Thumb>
                                <svg width="44" height="62" viewBox="0 0 44 62">
                                    <path d="M2 8l8-7 33 9v46l-9 6L2 54z" fill="#aeb2c0" />
                                    <path d="M2 8l8-7 33 9-9 6z" fill="#d9dce4" />
                                    <path d="M34 16l9-6v46l-9 6z" fill="#8d91a0" />
                                    <path d="M18 32l3-5 3 5z" fill="#85806a" />
                                </svg>
                            </Thumb>
                        </Thumbs>
                    </LibraryBody>
                </SidePanel>
            </Workspace>
        </Page>
    )
}
